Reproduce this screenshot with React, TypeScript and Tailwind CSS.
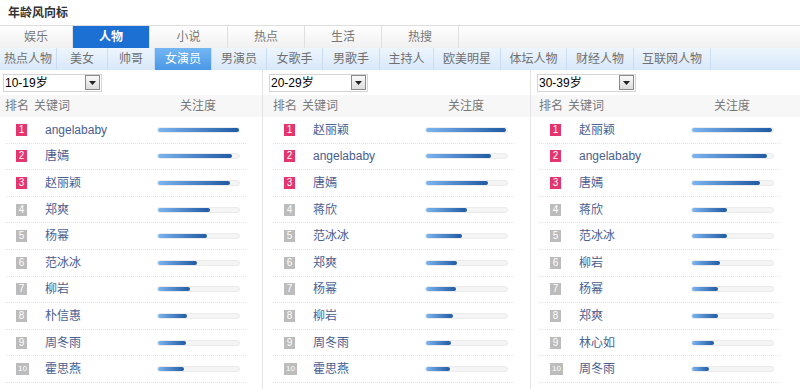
const topTabs = [
  { label: '娱乐', w: 73 },
  { label: '人物', w: 77, active: true },
  { label: '小说', w: 78 },
  { label: '热点', w: 77 },
  { label: '生活', w: 77 },
  { label: '热搜', w: 77 },
]

const subTabs = [
  { label: '热点人物', w: 57 },
  { label: '美女', w: 51 },
  { label: '帅哥', w: 47 },
  { label: '女演员', w: 57, active: true },
  { label: '男演员', w: 55 },
  { label: '女歌手', w: 56 },
  { label: '男歌手', w: 57 },
  { label: '主持人', w: 54 },
  { label: '欧美明星', w: 67 },
  { label: '体坛人物', w: 66 },
  { label: '财经人物', w: 67 },
  { label: '互联网人物', w: 77 },
]

type Entry = [string, number]

const columns: { age: string; pad: string; selPad: string; width: string; rows: Entry[] }[] = [
  {
    age: '10-19岁',
    pad: 'pl-0',
    selPad: 'pl-[3px]',
    width: 'w-[263px] border-r border-[#e3e3e3]',
    rows: [
      ['angelababy', 81],
      ['唐嫣', 74],
      ['赵丽颖', 72],
      ['郑爽', 52],
      ['杨幂', 49],
      ['范冰冰', 39],
      ['柳岩', 32],
      ['朴信惠', 29],
      ['周冬雨', 28],
      ['霍思燕', 26],
    ],
  },
  {
    age: '20-29岁',
    pad: 'pl-[5px]',
    selPad: 'pl-[6px]',
    width: 'w-[268px] border-r border-[#e3e3e3]',
    rows: [
      ['赵丽颖', 80],
      ['angelababy', 65],
      ['唐嫣', 62],
      ['蒋欣', 41],
      ['范冰冰', 36],
      ['郑爽', 31],
      ['杨幂', 30],
      ['柳岩', 27],
      ['周冬雨', 25],
      ['霍思燕', 24],
    ],
  },
  {
    age: '30-39岁',
    pad: 'pl-[3px]',
    selPad: 'pl-[6px]',
    width: 'flex-1',
    rows: [
      ['赵丽颖', 80],
      ['angelababy', 75],
      ['唐嫣', 68],
      ['蒋欣', 35],
      ['范冰冰', 35],
      ['柳岩', 28],
      ['杨幂', 26],
      ['郑爽', 26],
      ['林心如', 22],
      ['周冬雨', 17],
    ],
  },
]

function AgeSelect({ value }: { value: string }) {
  return (
    <div className="flex items-center w-[99px] h-[18px] border border-[#d4d4d4] bg-white">
      <span className="flex-1 pl-[1px] text-[12px] text-black leading-none">{value}</span>
      <div className="w-[15px] h-[15px] mr-[1px] flex items-center justify-center border border-[#8a8a8a] bg-gradient-to-b from-[#fafafa] to-[#dcdcdc]">
        <svg width="7" height="4" viewBox="0 0 7 4">
          <polygon points="0,0 7,0 3.5,4" fill="#222" />
        </svg>
      </div>
    </div>
  )
}

function RankRow({ rank, name, value }: { rank: number; name: string; value: number }) {
  const hot = rank <= 3
  return (
    <div className="flex items-center h-[26.6px] ml-[5px] w-[241px] border-b border-dotted border-[#e4e4e4]">
      <span
        className={`ml-[11px] w-[11px] h-[12px] flex items-center justify-center text-white leading-none ${
          rank === 10 ? 'text-[8px] w-[13px]' : 'text-[10px]'
        } ${hot ? 'bg-[#e4356f]' : 'bg-[#bcbcbc]'}`}
      >
        {rank}
      </span>
      <span className={`${rank === 10 ? 'ml-[16px]' : 'ml-[18px]'} w-[112px] text-[12px] text-[#4b6090]`}>{name}</span>
      <div className="relative w-[83px] h-[6px] rounded-full bg-[#f5f5f5] border border-[#ebebeb]">
        <div
          className="absolute left-0 top-0 h-[4px] rounded-full bg-gradient-to-r from-[#7cb5f0] to-[#1f5aa3]"
          style={{ width: `${value}px` }}
        />
      </div>
    </div>
  )
}

export default function App() {
  return (
    <div className="w-[800px] h-[389px] bg-white overflow-hidden text-[12px] font-['Liberation_Sans','Noto_Sans_CJK_SC',sans-serif]">
      <div className="h-[25px] flex items-center pl-[8px] font-bold text-[#333]">年龄风向标</div>

      <div className="h-[23px] flex border-t border-[#dedede] bg-gradient-to-b from-white to-[#f0f0f0]">
        {topTabs.map((t) => (
          <div
            key={t.label}
            style={{ width: t.w }}
            className={`h-full flex items-center justify-center border-r border-[#e0e0e0] ${
              t.active ? 'bg-[#1c6fd3] text-white font-bold' : 'text-[#777]'
            }`}
          >
            {t.label}
          </div>
        ))}
      </div>

      <div className="h-[22px] flex bg-gradient-to-b from-[#edf5fd] to-[#d8e8f9]">
        {subTabs.map((t) => (
          <div
            key={t.label}
            style={{ width: t.w }}
            className={`h-full flex items-center justify-center border-r border-[#c9dcf1] ${
              t.active ? 'bg-gradient-to-b from-[#74b6f3] to-[#4a97e6] text-white' : 'text-[#707070]'
            }`}
          >
            {t.label}
          </div>
        ))}
      </div>

      <div className="flex h-[319px]">
        {columns.map((col) => (
          <div key={col.age} className={col.width}>
            <div className={`h-[25px] flex items-center ${col.selPad}`}>
              <AgeSelect value={col.age} />
            </div>
            <div className={`h-[22px] flex items-center bg-[#f7f7f7] text-[#777] ${col.pad}`}>
              <span className="ml-[5px] w-[29px]">排名</span>
              <span className="w-[146px]">关键词</span>
              <span>关注度</span>
            </div>
            <div className={col.pad}>
              {col.rows.map(([name, value], i) => (
                <RankRow key={name} rank={i + 1} name={name} value={value} />
              ))}
            </div>
          </div>
        ))}
      </div>
    </div>
  )
}
